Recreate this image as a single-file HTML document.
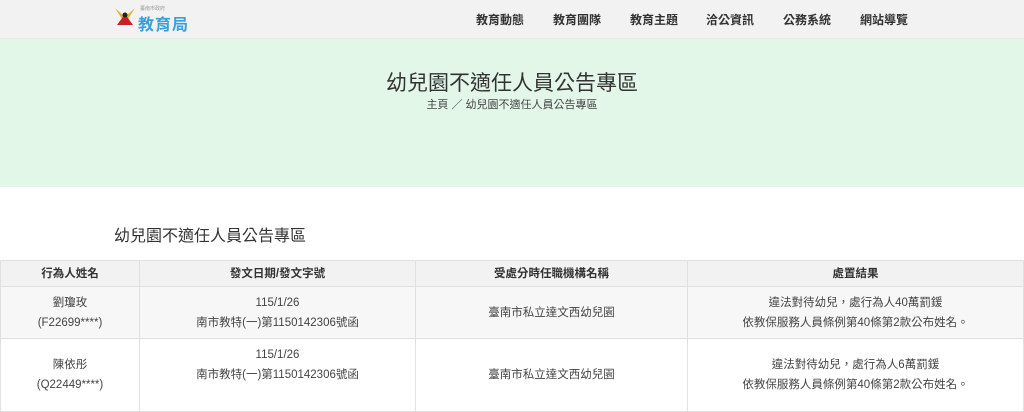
<!DOCTYPE html>
<html><head><meta charset="utf-8"><style>
*{margin:0;padding:0;box-sizing:border-box}
body{width:1024px;height:411px;overflow:hidden;background:#fff;font-family:"Liberation Sans","Noto Sans CJK TC",sans-serif;color:#333}
.hd{position:absolute;left:0;top:0;width:1024px;height:39px;background:#f2f2f2;border-bottom:1px solid #e2ece4}
.logo{position:absolute;left:114px;top:5px}
.logo .t{position:absolute;left:24px;top:6px;font-size:16px;font-weight:bold;color:#3a9fd8;white-space:nowrap;letter-spacing:1px}
.logo .s{position:absolute;left:26px;top:0;font-size:5px;color:#999;white-space:nowrap}
.nav{position:absolute;top:11px;font-size:12px;font-weight:bold;color:#333;white-space:nowrap}
.band{position:absolute;left:0;top:39px;width:1024px;height:148px;background:#e3f7e9}
.ttl{position:absolute;top:67px;width:1024px;text-align:center;font-size:21px;color:#333}
.bc{position:absolute;top:96px;width:1024px;text-align:center;font-size:11px;color:#444}
.h2{position:absolute;left:114px;top:222px;font-size:16px;color:#333}
table{position:absolute;left:0;top:260px;width:1024px;border-collapse:collapse;font-size:11.5px}
td,th{border:1px solid #e0e0e0;text-align:center;line-height:20px}
th{background:#f2f2f2;height:26px;font-weight:bold;color:#333}
td{color:#444}
tr.a td{background:#f7f7f7;height:52px}
tr.b td{height:73px;vertical-align:top;padding-top:6px}
</style></head><body>
<div class="hd">
<div class="logo"><svg width="22" height="22" viewBox="0 0 22 22"><path d="M1 3 L11 12 L21 3 L14 14 L11 11 L8 14Z" fill="#e8b030"/><path d="M3 20 L11 9 L19 20Z" fill="#c8202a"/><circle cx="11" cy="10" r="2.5" fill="#222"/></svg><span class="s">臺南市政府</span><span class="t">教育局</span></div>
<span class="nav" style="left:476px">教育動態</span>
<span class="nav" style="left:553px">教育團隊</span>
<span class="nav" style="left:630px">教育主題</span>
<span class="nav" style="left:706px">洽公資訊</span>
<span class="nav" style="left:783px">公務系統</span>
<span class="nav" style="left:860px">網站導覽</span>
</div>
<div class="band"></div>
<div class="ttl">幼兒園不適任人員公告專區</div>
<div class="bc">主頁 ／ 幼兒園不適任人員公告專區</div>
<div class="h2">幼兒園不適任人員公告專區</div>
<table>
<tr><th style="width:139px">行為人姓名</th><th style="width:276px">發文日期/發文字號</th><th style="width:272px">受處分時任職機構名稱</th><th>處置結果</th></tr>
<tr class="a"><td>劉瓊玫<br>(F22699****)</td><td>115/1/26<br>南市教特(一)第1150142306號函</td><td>臺南市私立達文西幼兒園</td><td>違法對待幼兒，處行為人40萬罰鍰<br>依教保服務人員條例第40條第2款公布姓名。</td></tr>
<tr class="b"><td style="padding-top:16px">陳依彤<br>(Q22449****)</td><td>115/1/26<br>南市教特(一)第1150142306號函</td><td style="padding-top:26px">臺南市私立達文西幼兒園</td><td style="padding-top:16px">違法對待幼兒，處行為人6萬罰鍰<br>依教保服務人員條例第40條第2款公布姓名。</td></tr>
</table>
</body></html>
